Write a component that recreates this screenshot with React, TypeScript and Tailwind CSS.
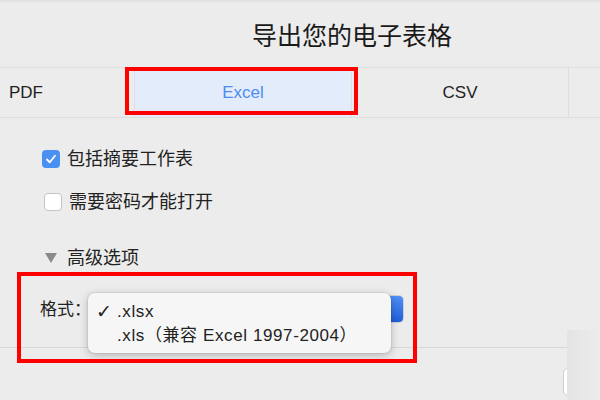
const font = {
  fontFamily: '"Liberation Sans", "Noto Sans CJK SC", sans-serif',
};

function Tab({ label, active }: { label: string; active?: boolean }) {
  return (
    <div
      className={`flex h-full w-[217px] flex-none items-center justify-center border-r border-[#dedede] text-[17px] ${
        active ? "bg-[#e3ecfb] text-[#4d8cf0]" : "text-[#1f1f1f]"
      }`}
    >
      {label}
    </div>
  );
}

function Checkbox({ checked, label }: { checked?: boolean; label: string }) {
  return (
    <div className="flex h-[18px] items-center gap-[7px]">
      {checked ? (
        <span className="flex h-[18px] w-[18px] items-center justify-center rounded-[4px] bg-[#4a8ff2]">
          <svg width="12" height="12" viewBox="0 0 12 12" fill="none">
            <path d="M2 6.5 4.8 9.3 10 2.8" stroke="white" strokeWidth="1.8" strokeLinecap="round" strokeLinejoin="round" />
          </svg>
        </span>
      ) : (
        <span className="ml-[2px] h-[18px] w-[18px] rounded-[4px] border border-[#c4c4c4] bg-white" />
      )}
      <span className="text-[18px] leading-none text-[#222]">{label}</span>
    </div>
  );
}

export default function App() {
  return (
    <div className="relative h-[400px] w-[600px] overflow-hidden bg-[#ececec]" style={font}>
      <div className="h-[2px] bg-[#e2e2e2]" />

      {/* Titre */}
      <div className="flex h-[65px] items-center pl-[252px] pt-[4px]">
        <span className="text-[25px] leading-none text-[#1a1a1a]">导出您的电子表格</span>
      </div>

      {/* Onglets */}
      <div className="flex h-[51px] border-y border-[#dedede]">
        <div className="-ml-[82px] flex">
          <Tab label="PDF" />
          <Tab label="Excel" active />
          <Tab label="CSV" />
          <Tab label="" />
        </div>
      </div>

      {/* Options */}
      <div className="flex flex-col pl-[42px]">
        <div className="mt-[32px]">
          <Checkbox checked label="包括摘要工作表" />
        </div>
        <div className="mt-[25px]">
          <Checkbox label="需要密码才能打开" />
        </div>
        <div className="mt-[38px] flex h-[18px] items-center gap-[10px]">
          <svg width="12" height="10" viewBox="0 0 12 10" className="ml-[3px]">
            <path d="M0 0h12L6 10z" fill="#8a8a8a" />
          </svg>
          <span className="text-[18px] leading-none text-[#222]">高级选项</span>
        </div>
        <div className="-ml-[2px] mt-[28px] flex h-[28px] items-center gap-[4px]">
          <span className="text-[17px] leading-none text-[#222]">格式：</span>
          <div className="flex h-[28px] w-[309px] overflow-hidden rounded-[5px] border border-[#d0d0d0] bg-white">
            <div className="flex-1" />
            <div className="w-[22px] bg-gradient-to-b from-[#4f8ff5] to-[#1f5fd8]" />
          </div>
        </div>
      </div>
      <div className="mt-[24px] h-px w-[567px] bg-[#d9d9d9]" />

      {/* Menu déroulant */}
      <div className="absolute left-[88px] top-[293px] flex h-[60px] w-[303px] flex-col justify-center gap-[6px] rounded-[7px] bg-[#f6f6f6] pl-[8px] text-[17px] leading-none tracking-[0.6px] text-[#222] shadow-[0_2px_8px_rgba(0,0,0,0.25)] ring-1 ring-black/5">
        <div className="flex items-center">
          <span className="w-[21px] text-[19px] font-bold" style={{ fontFamily: '"DejaVu Sans", sans-serif' }}>
            ✓
          </span>
          <span>.xlsx</span>
        </div>
        <div className="pl-[21px]">.xls（兼容 Excel 1997-2004）</div>
      </div>

      {/* Bord droit */}
      <div className="absolute left-[563px] top-[368px] h-[28px] w-[40px] rounded-[5px] border border-[#cfcfcf] bg-white" />
      <div className="absolute left-[567px] top-[330px] h-[70px] w-[33px] bg-gradient-to-r from-[#e4e4e4] to-[#ececec]" />

      {/* Annotations rouges */}
      <div className="absolute left-[125px] top-[67px] h-[48px] w-[233px] border-4 border-[#ff0000]" />
      <div className="absolute left-[17px] top-[272px] h-[91px] w-[400px] border-4 border-[#ff0000]" />
    </div>
  );
}
